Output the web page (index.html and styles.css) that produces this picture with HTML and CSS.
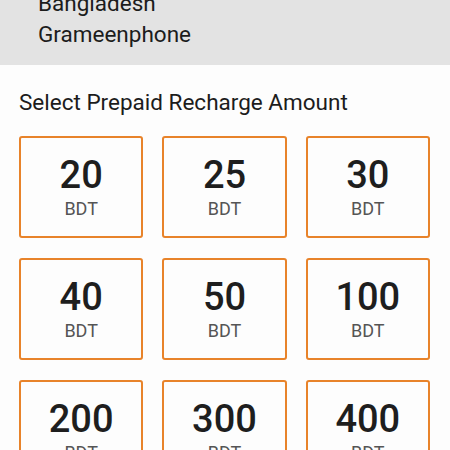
FILE: index.html
```html
<!DOCTYPE html>
<html>
<head>
<meta charset="utf-8">
<link rel="stylesheet" href="styles.css">
</head>
<body>
<div class="header">
  <div class="header-lines">
    <div class="line">Bangladesh</div>
    <div class="line">Grameenphone</div>
  </div>
</div>
<div class="content">
  <div class="title">Select Prepaid Recharge Amount</div>
  <div class="grid">
    <div class="card"><div class="amount">20</div><div class="cur">BDT</div></div>
    <div class="card"><div class="amount">25</div><div class="cur">BDT</div></div>
    <div class="card"><div class="amount">30</div><div class="cur">BDT</div></div>
    <div class="card"><div class="amount">40</div><div class="cur">BDT</div></div>
    <div class="card"><div class="amount">50</div><div class="cur">BDT</div></div>
    <div class="card"><div class="amount">100</div><div class="cur">BDT</div></div>
    <div class="card"><div class="amount">200</div><div class="cur">BDT</div></div>
    <div class="card"><div class="amount">300</div><div class="cur">BDT</div></div>
    <div class="card"><div class="amount">400</div><div class="cur">BDT</div></div>
  </div>
</div>
</body>
</html>
```
FILE: styles.css
```css
html, body {
  margin: 0;
  padding: 0;
  background: #fdfdfd;
  font-family: Roboto, "Noto Sans", sans-serif;
  overflow: hidden;
}
.header {
  background: #e3e3e3;
  height: 65px;
  padding-left: 38px;
  box-sizing: border-box;
  overflow: hidden;
}
.header-lines {
  margin-top: -12px;
}
.line {
  font-size: 22.5px;
  line-height: 31px;
  color: #1c1c1c;
}
.content {
  padding: 24px 20px 0 19px;
}
.title {
  font-size: 22.5px;
  line-height: 26px;
  color: #1c1c1c;
}
.grid {
  margin-top: 21px;
  display: grid;
  grid-template-columns: repeat(3, 1fr);
  column-gap: 19px;
  row-gap: 20px;
}
.card {
  height: 102px;
  box-sizing: border-box;
  border: 2px solid #e8832a;
  border-radius: 3px;
  display: flex;
  flex-direction: column;
  align-items: center;
  justify-content: center;
}
.amount {
  font-size: 38px;
  font-weight: 500;
  line-height: 40px;
  color: #1e1e1e;
}
.cur {
  font-size: 18px;
  line-height: 20px;
  color: #555;
  margin-top: 4px;
}
```
